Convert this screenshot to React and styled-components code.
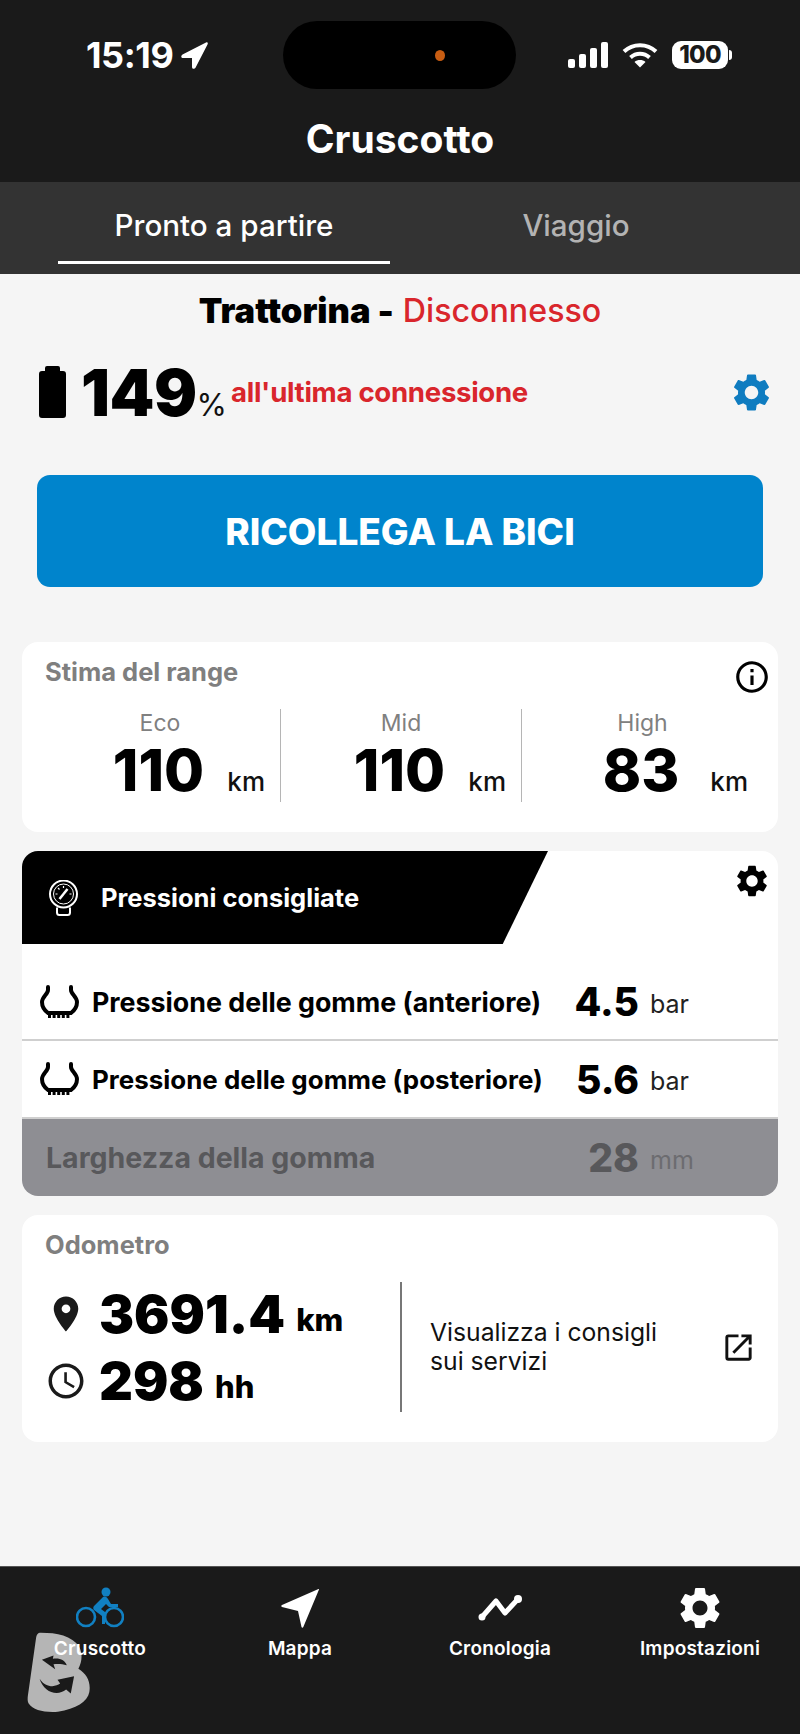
import styled, { createGlobalStyle } from 'styled-components';
import { MdSettings, MdInfoOutline, MdPlace, MdAccessTime, MdOpenInNew } from 'react-icons/md';

const GlobalStyle = createGlobalStyle`
  html, body {
    margin: 0;
    padding: 0;
    background: #f5f5f5;
    font-family: 'Inter', 'Liberation Sans', sans-serif;
  }
  * { box-sizing: border-box; }
`;

const Page = styled.div`
  position: relative;
  width: 800px;
  height: 1734px;
  display: flex;
  flex-direction: column;
  overflow: hidden;
  background: #f5f5f5;
`;

const Header = styled.header`
  height: 182px;
  padding-top: 21px;
  background: #1a1a1a;
  color: #fff;
`;

const StatusBar = styled.div`
  display: grid;
  grid-template-columns: 283px 233px 1fr;
  height: 68px;
`;

const StatusLeft = styled.div`
  display: flex;
  align-items: center;
  gap: 8px;
  padding-left: 86px;
  font-size: 36px;
  font-weight: 700;
  letter-spacing: -0.4px;
`;

const Island = styled.div`
  display: flex;
  align-items: center;
  justify-content: flex-end;
  padding-right: 71px;
  background: #000;
  border-radius: 34px;
`;

const IslandDot = styled.span`
  width: 10px;
  height: 11px;
  border-radius: 50%;
  background: #c85d12;
`;

const StatusRight = styled.div`
  display: flex;
  align-items: center;
  padding-left: 52px;
  gap: 14px;
`;

const BatteryPill = styled.div`
  position: relative;
  width: 56px;
  height: 28px;
  border-radius: 9px;
  background: #fff;
  color: #1a1a1a;
  font-size: 24px;
  font-weight: 800;
  line-height: 28px;
  text-align: center;
  letter-spacing: -0.8px;

  &::after {
    content: '';
    position: absolute;
    right: -4px;
    top: 9px;
    width: 3px;
    height: 10px;
    border-radius: 0 3px 3px 0;
    background: #fff;
  }
`;

const Title = styled.h1`
  margin: 28px 0 0;
  font-size: 39px;
  line-height: 44px;
  font-weight: 700;
  text-align: center;
`;

const Tabs = styled.nav`
  display: flex;
  gap: 20px;
  height: 92px;
  padding: 0 58px 10px;
  background: #333;
`;

const Tab = styled.div`
  flex: 1;
  display: flex;
  align-items: center;
  justify-content: center;
  padding-top: 6px;
  font-size: 29.6px;
  font-weight: 500;
  color: ${(props) => (props.$active ? '#fff' : '#b3b3b3')};
  border-bottom: 3px solid ${(props) => (props.$active ? '#fff' : 'transparent')};
`;

const Main = styled.main`
  flex: 1;
  padding: 0 22px;
`;

const BikeName = styled.div`
  height: 72px;
  display: flex;
  align-items: center;
  justify-content: center;
  gap: 9px;
  font-size: 34.5px;
  font-weight: 900;
  color: #000;
`;

const Disconnected = styled.span`
  font-size: 32.2px;
  font-weight: 500;
  color: #d9262c;
`;

const ChargeRow = styled.div`
  display: flex;
  align-items: center;
  height: 92px;
  padding: 0 0 0 17px;
`;

const Charge = styled.div`
  display: flex;
  align-items: baseline;
  margin-left: 15px;
`;

const ChargeValue = styled.span`
  font-size: 64px;
  font-weight: 900;
  color: #000;
  letter-spacing: -0.5px;
`;

const ChargeUnit = styled.span`
  font-size: 31px;
  color: #111;
`;

const ChargeNote = styled.span`
  margin-left: 4px;
  font-size: 27.6px;
  font-weight: 700;
  color: #d9262c;
  letter-spacing: -0.3px;
`;

const GearSlot = styled.div`
  display: flex;
  margin-left: auto;
  margin-right: 4px;
  color: ${(props) => props.$color};
`;

const ReconnectButton = styled.button`
  display: block;
  width: 726px;
  height: 112px;
  margin: 37px 0 55px 15px;
  border: 0;
  border-radius: 13px;
  background: #0084cc;
  color: #fff;
  font-family: inherit;
  font-size: 37px;
  font-weight: 800;
`;

const Card = styled.section`
  position: relative;
  overflow: hidden;
  width: 756px;
  background: #fff;
  border-radius: 16px;
  margin-bottom: ${(props) => props.$gap || 0}px;
`;

const CardTitle = styled.h2`
  margin: 0;
  font-size: 25.5px;
  line-height: 30px;
  font-weight: 700;
  color: #7f7f7f;
`;

const RangeCard = styled(Card)`
  height: 190px;
  padding: 15px 16px 0 23px;
`;

const CornerIcon = styled.div`
  position: absolute;
  right: ${(props) => props.$right}px;
  top: ${(props) => props.$top}px;
  display: flex;
  color: #000;
`;

const RangeGrid = styled.div`
  display: grid;
  grid-template-columns: repeat(3, 241px);
  margin: 22px 0 0 -5px;
`;

const RangeCol = styled.div`
  height: 93px;
  border-right: ${(props) => (props.$last ? '0' : '1.5px solid #b5b5b5')};
`;

const RangeLabel = styled.div`
  font-size: 23px;
  line-height: 28px;
  color: #808080;
  text-align: center;
`;

const RangeValue = styled.div`
  display: grid;
  grid-template-columns: 1fr auto 1fr;
  align-items: baseline;
  margin-top: 3px;
`;

const BigNumber = styled.span`
  grid-column: 2;
  margin-left: -3px;
  font-size: 58px;
  line-height: 60px;
  font-weight: 800;
  color: #000;
`;

const RangeUnit = styled.span`
  justify-self: end;
  padding-right: 15px;
  font-size: 26px;
  font-weight: 500;
  color: #111;
`;

const PressureCard = styled(Card)`
  height: 345px;
`;

const Banner = styled.div`
  display: flex;
  align-items: center;
  gap: 22px;
  width: 526px;
  height: 93px;
  padding-left: 26px;
  background: #000;
  color: #fff;
  clip-path: polygon(0 0, 100% 0, 91.4% 100%, 0 100%);
  font-size: 25.5px;
  font-weight: 700;
`;

const PressureRow = styled.div`
  display: grid;
  grid-template-columns: 1fr 90px 139px;
  align-items: center;
  height: ${(props) => props.$height}px;
  padding-top: ${(props) => props.$top || 0}px;
  background: ${(props) => (props.$disabled ? '#8e8e93' : '#fff')};
  color: ${(props) => (props.$disabled ? '#58585b' : '#000')};
  border-bottom: ${(props) => (props.$disabled ? '0' : '2px solid #cfcfcf')};
`;

const PressureLabel = styled.div`
  display: flex;
  align-items: center;
  gap: 13px;
  padding-left: ${(props) => props.$indent}px;
  font-size: ${(props) => props.$size}px;
  font-weight: 700;
  white-space: nowrap;
`;

const PressureValue = styled.div`
  font-size: 39px;
  font-weight: 800;
  text-align: right;
`;

const PressureUnit = styled.div`
  padding-left: 11px;
  padding-top: 4px;
  font-size: 25px;
  color: ${(props) => (props.$disabled ? '#6c6c70' : '#222')};
`;

const OdometerCard = styled(Card)`
  height: 227px;
  padding: 15px 0 0 23px;
`;

const OdometerBody = styled.div`
  display: grid;
  grid-template-columns: 355px 1fr;
  height: 130px;
  margin-top: 22px;
`;

const OdometerStats = styled.div`
  display: flex;
  flex-direction: column;
  justify-content: center;
  gap: 5px;
`;

const OdometerRow = styled.div`
  display: flex;
  align-items: center;
`;

const StatIcon = styled.div`
  display: flex;
  justify-content: center;
  width: 42px;
  margin-right: 12px;
  color: #1a1a1a;
`;

const StatValue = styled.span`
  font-size: 52.5px;
  line-height: 62px;
  font-weight: 900;
  color: #000;
`;

const StatUnit = styled.span`
  margin-left: 11px;
  font-size: 31px;
  font-weight: 800;
  color: #000;
  align-self: flex-end;
  line-height: 50px;
`;

const ServiceLink = styled.div`
  display: flex;
  align-items: center;
  justify-content: space-between;
  padding: 0 22px 0 28px;
  border-left: 2px solid #777;
  font-size: 24.7px;
  line-height: 29px;
  font-weight: 400;
  color: #111;
`;

const BottomNav = styled.nav`
  display: grid;
  grid-template-columns: repeat(4, 200px);
  height: 168px;
  background: #1a1a1a;
  border-top: 1px solid #555;
`;

const NavItem = styled.div`
  position: relative;
  z-index: 1;
  display: flex;
  flex-direction: column;
  align-items: center;
  color: ${(props) => (props.$active ? '#1180c2' : '#fff')};
`;

const NavIcon = styled.div`
  display: flex;
  align-items: center;
  justify-content: center;
  height: 62px;
  padding-top: 20px;
`;

const NavLabel = styled.div`
  margin-top: 8px;
  font-size: 19px;
  font-weight: 600;
  line-height: 24px;
  color: #fff;
  letter-spacing: 0.2px;
`;

const Watermark = styled.svg`
  position: absolute;
  left: 27px;
  top: 1632px;
  z-index: 0;
`;

const LocationArrow = () => (
  <svg width="27" height="27" viewBox="0 0 27 27">
    <path d="M25 .5 1.500 12.500C-.5 13.700 0 16 2.200 16H11v9c0 2 2.500 2.600 3.500 .8L26.500 2.500C27.300 .8 26.500 -.2 25 .5Z" fill="currentColor" />
  </svg>
);

const Signal = () => (
  <svg width="40" height="26" viewBox="0 0 40 26" fill="#fff">
    <rect x="0" y="17" width="7" height="9" rx="2" />
    <rect x="11" y="12" width="7" height="14" rx="2" />
    <rect x="22" y="6" width="7" height="20" rx="2" />
    <rect x="33" y="0" width="7" height="26" rx="2" />
  </svg>
);

const Wifi = () => (
  <svg width="36" height="26" viewBox="0 0 36 26" fill="none" stroke="#fff" strokeWidth="4">
    <path d="M2 9.500C11 1 25 1 34 9.500" />
    <path d="M8.500 15.500c5.500-5 13.500-5 19 0" />
    <path d="M18 25.500 12.500 20c3-2.600 8-2.600 11 0Z" fill="#fff" stroke="none" />
  </svg>
);

const BatteryIcon = () => (
  <svg width="27" height="52" viewBox="0 0 27 52">
    <path d="M8 0h11a2 2 0 0 1 2 2v3h3a3 3 0 0 1 3 3v41a3 3 0 0 1-3 3H3a3 3 0 0 1-3-3V8a3 3 0 0 1 3-3h3V2a2 2 0 0 1 2-2Z" fill="#000" />
  </svg>
);

const Gauge = () => (
  <svg width="31" height="36" viewBox="0 0 31 36" fill="none" stroke="#fff">
    <circle cx="15.500" cy="14" r="13.500" strokeWidth="2" />
    <circle cx="15.500" cy="14" r="10" strokeWidth="1" />
    <path d="M11.500 19 19.500 9" strokeWidth="2.500" />
    <path d="M7.500 14h2M21.500 14h2M10 8l1.500 1.500M15.500 6v2" strokeWidth="1.200" />
    <path d="M9 27.500v5c0 1.500 1 2.500 2.500 2.500h8c1.500 0 2.500-1 2.500-2.500v-5" strokeWidth="2" />
  </svg>
);

const Tyre = () => (
  <svg width="39" height="34" viewBox="0 0 39 34" fill="none" stroke="#000">
    <path d="M8 2v3c0 4-6 7-6 12 0 4 2 8 6 11h23c4-3 6-7 6-11 0-5-6-8-6-12V2" strokeWidth="4" strokeLinecap="round" />
    <path d="M8 30.500h23" strokeWidth="5" strokeDasharray="3 1.600" />
  </svg>
);

const Bike = () => (
  <svg width="48" height="42" viewBox="0 0 48 42">
    <g fill="none" stroke="currentColor" strokeWidth="2.600">
      <circle cx="10" cy="30" r="9" />
      <circle cx="38" cy="30" r="9" />
    </g>
    <circle cx="30" cy="5" r="4.500" fill="currentColor" />
    <path d="M27 10c2-1 4 0 5 2l3 5h7v3h-9l-3-3-5 5 4 3v12h-3V29l-8-6c-1-1-1-3 0-4Z" fill="currentColor" />
  </svg>
);

const MapArrow = () => (
  <svg width="38" height="40" viewBox="0 0 38 40">
    <path d="M37.500 1 1 17c-1 .5-1 1.500 0 2l16 4 3.500 16c.3 1 1.500 1 1.800 0L38 1.500c.1-.5 0-.7-.5-.5Z" fill="currentColor" />
  </svg>
);

const History = () => (
  <svg width="44" height="26" viewBox="0 0 44 26" fill="none" stroke="currentColor" strokeWidth="5" strokeLinejoin="round">
    <path d="M4 22 18 6l9 12L40 4" />
    <circle cx="4" cy="22" r="3.500" fill="currentColor" stroke="none" />
    <circle cx="40" cy="4" r="4" fill="currentColor" stroke="none" />
  </svg>
);

const App = () => (
  <Page>
    <GlobalStyle />
    <Header>
      <StatusBar>
        <StatusLeft>
          15:19
          <LocationArrow />
        </StatusLeft>
        <Island>
          <IslandDot />
        </Island>
        <StatusRight>
          <Signal />
          <Wifi />
          <BatteryPill>100</BatteryPill>
        </StatusRight>
      </StatusBar>
      <Title>Cruscotto</Title>
    </Header>
    <Tabs>
      <Tab $active>Pronto a partire</Tab>
      <Tab>Viaggio</Tab>
    </Tabs>
    <Main>
      <BikeName>
        Trattorina - <Disconnected>Disconnesso</Disconnected>
      </BikeName>
      <ChargeRow>
        <BatteryIcon />
        <Charge>
          <ChargeValue>149</ChargeValue>
          <ChargeUnit>%</ChargeUnit>
        </Charge>
        <ChargeNote>all'ultima connessione</ChargeNote>
        <GearSlot $color="#0f7cc0">
          <MdSettings size={45} />
        </GearSlot>
      </ChargeRow>
      <ReconnectButton>RICOLLEGA LA BICI</ReconnectButton>

      <RangeCard $gap={19}>
        <CardTitle>Stima del range</CardTitle>
        <CornerIcon $right={7} $top={16}>
          <MdInfoOutline size={38} />
        </CornerIcon>
        <RangeGrid>
          <RangeCol>
            <RangeLabel>Eco</RangeLabel>
            <RangeValue>
              <BigNumber>110</BigNumber>
              <RangeUnit>km</RangeUnit>
            </RangeValue>
          </RangeCol>
          <RangeCol>
            <RangeLabel>Mid</RangeLabel>
            <RangeValue>
              <BigNumber>110</BigNumber>
              <RangeUnit>km</RangeUnit>
            </RangeValue>
          </RangeCol>
          <RangeCol $last>
            <RangeLabel>High</RangeLabel>
            <RangeValue>
              <BigNumber>83</BigNumber>
              <RangeUnit>km</RangeUnit>
            </RangeValue>
          </RangeCol>
        </RangeGrid>
      </RangeCard>

      <PressureCard $gap={19}>
        <Banner>
          <Gauge />
          Pressioni consigliate
        </Banner>
        <CornerIcon $right={7} $top={11}>
          <MdSettings size={38} />
        </CornerIcon>
        <PressureRow $height={97} $top={20}>
          <PressureLabel $indent={18} $size={26.8}>
            <Tyre />
            Pressione delle gomme (anteriore)
          </PressureLabel>
          <PressureValue>4.5</PressureValue>
          <PressureUnit>bar</PressureUnit>
        </PressureRow>
        <PressureRow $height={78}>
          <PressureLabel $indent={18} $size={25.95}>
            <Tyre />
            Pressione delle gomme (posteriore)
          </PressureLabel>
          <PressureValue>5.6</PressureValue>
          <PressureUnit>bar</PressureUnit>
        </PressureRow>
        <PressureRow $height={77} $disabled>
          <PressureLabel $indent={24} $size={28.5}>
            Larghezza della gomma
          </PressureLabel>
          <PressureValue>28</PressureValue>
          <PressureUnit $disabled>mm</PressureUnit>
        </PressureRow>
      </PressureCard>

      <OdometerCard>
        <CardTitle>Odometro</CardTitle>
        <OdometerBody>
          <OdometerStats>
            <OdometerRow>
              <StatIcon>
                <MdPlace size={44} />
              </StatIcon>
              <StatValue>3691.4</StatValue>
              <StatUnit>km</StatUnit>
            </OdometerRow>
            <OdometerRow>
              <StatIcon>
                <MdAccessTime size={46} />
              </StatIcon>
              <StatValue>298</StatValue>
              <StatUnit>hh</StatUnit>
            </OdometerRow>
          </OdometerStats>
          <ServiceLink>
            <span>
              Visualizza i consigli
              <br />
              sui servizi
            </span>
            <MdOpenInNew size={35} />
          </ServiceLink>
        </OdometerBody>
      </OdometerCard>
    </Main>
    <BottomNav>
      <NavItem $active>
        <NavIcon>
          <Bike />
        </NavIcon>
        <NavLabel>Cruscotto</NavLabel>
      </NavItem>
      <NavItem>
        <NavIcon>
          <MapArrow />
        </NavIcon>
        <NavLabel>Mappa</NavLabel>
      </NavItem>
      <NavItem>
        <NavIcon>
          <History />
        </NavIcon>
        <NavLabel>Cronologia</NavLabel>
      </NavItem>
      <NavItem>
        <NavIcon>
          <MdSettings size={50} />
        </NavIcon>
        <NavLabel>Impostazioni</NavLabel>
      </NavItem>
    </BottomNav>
    <Watermark width="63" height="80" viewBox="80 95 190 240">
      <path
        d="M122 97C170 97 215 105 238 140c10 20 8 45-3 65 25 15 38 40 33 70-5 30-40 50-95 60-40 3-75-5-88-25-5-8-3-20 0-40l22-155c2-12 5-18 15-18Z"
        fill="#b5b5b5"
      />
      <path d="M125 178l35-13-2 10c22-3 37 5 42 20-15-5-30-5-40-3l5 15Z" fill="#1a1a1a" />
      <path d="M118 235c17 27 47 27 62 15l-8-12 50-10-10 52-14-12c-28 22-68 7-80-33Z" fill="#1a1a1a" />
    </Watermark>
  </Page>
);

export default App;
